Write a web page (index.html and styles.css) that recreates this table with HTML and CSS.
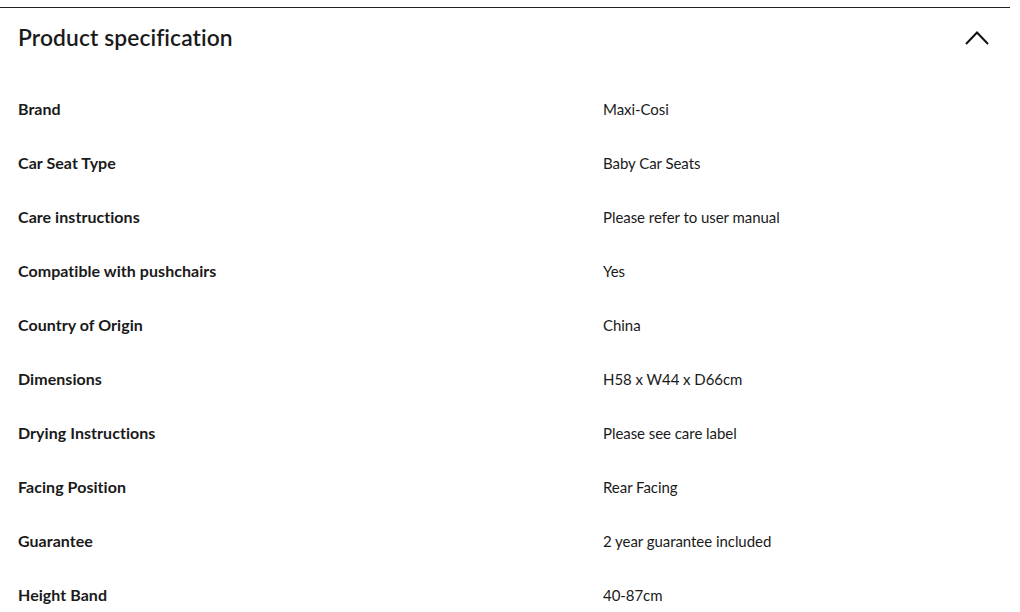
FILE: index.html
```html
<!DOCTYPE html>
<html>
<head>
    <link rel="stylesheet" href="styles.css">
</head>
<body>
    <section class="spec-panel">
        <div class="spec-header">
            <h2 class="spec-title">Product specification</h2>
            <svg class="chevron" width="24" height="14" viewBox="0 0 24 14">
                <path d="M1 13 L12 1.5 L23 13" fill="none" stroke="#111" stroke-width="2"/>
            </svg>
        </div>
        <dl class="spec-list">
            <div class="spec-row"><dt>Brand</dt><dd>Maxi-Cosi</dd></div>
            <div class="spec-row"><dt>Car Seat Type</dt><dd>Baby Car Seats</dd></div>
            <div class="spec-row"><dt>Care instructions</dt><dd>Please refer to user manual</dd></div>
            <div class="spec-row"><dt>Compatible with pushchairs</dt><dd>Yes</dd></div>
            <div class="spec-row"><dt>Country of Origin</dt><dd>China</dd></div>
            <div class="spec-row"><dt>Dimensions</dt><dd>H58 x W44 x D66cm</dd></div>
            <div class="spec-row"><dt>Drying Instructions</dt><dd>Please see care label</dd></div>
            <div class="spec-row"><dt>Facing Position</dt><dd>Rear Facing</dd></div>
            <div class="spec-row"><dt>Guarantee</dt><dd>2 year guarantee included</dd></div>
            <div class="spec-row"><dt>Height Band</dt><dd>40-87cm</dd></div>
        </dl>
    </section>
</body>
</html>
```

FILE: styles.css
```css
body {
    margin: 0;
    background: #fff;
    color: #1a1a1a;
    font-family: Lato, "Open Sans", sans-serif;
    overflow: hidden;
}

.spec-panel {
    width: 1010px;
    margin-top: 7px;
    border-top: 1px solid #222;
}

.spec-header {
    display: flex;
    justify-content: space-between;
    align-items: center;
    height: 57px;
    padding: 0 21px 0 18px;
}

.spec-title {
    margin: 0;
    font-size: 22.8px;
    font-weight: 600;
    letter-spacing: 0.1px;
}

.chevron {
    margin-top: 2px;
}

.spec-list {
    margin: 17px 0 0;
    padding: 0 18px;
}

.spec-row {
    display: grid;
    grid-template-columns: 585px 1fr;
    height: 54px;
    align-items: center;
    font-size: 15px;
    line-height: 18px;
}

.spec-row dt {
    font-size: 16px;
    font-weight: 700;
    letter-spacing: 0.05px;
}

.spec-row dd {
    margin: 0;
    letter-spacing: -0.05px;
}
```
